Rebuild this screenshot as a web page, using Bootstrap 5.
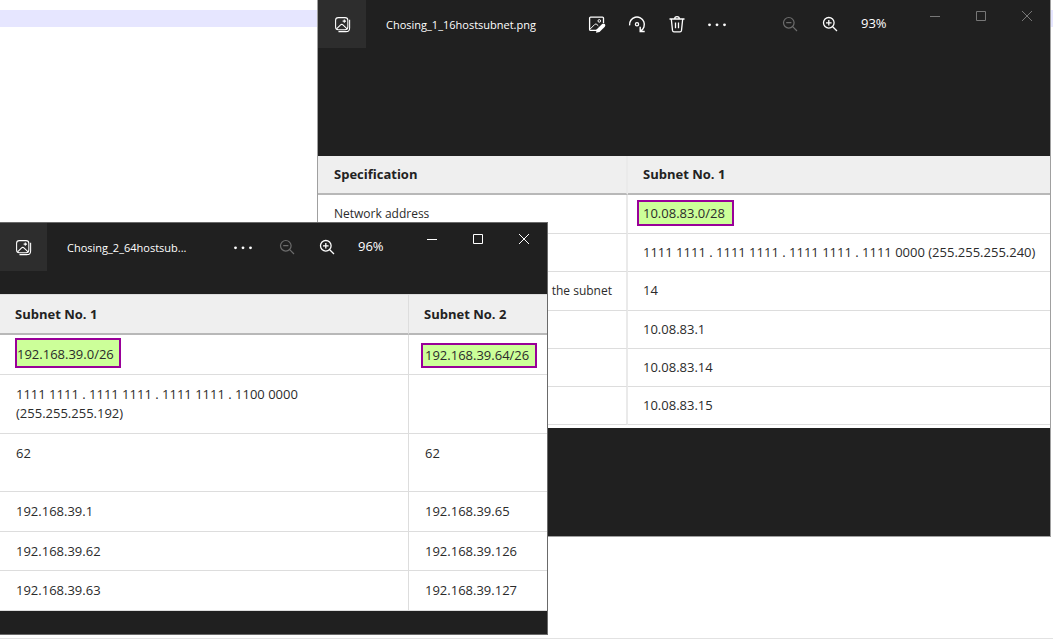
<!DOCTYPE html>
<html lang="en">
<head>
<meta charset="utf-8">
<meta name="viewport" content="width=device-width, initial-scale=1">
<title>Subnet images</title>
<link href="https://cdn.jsdelivr.net/npm/bootstrap@5.3.0/dist/css/bootstrap.min.css" rel="stylesheet">
<style>
  body { font-family: "Open Sans", "Noto Sans", sans-serif; font-size: 13px; line-height: 19px; background: #fff; color: #2b2b2b; }
  .desk { min-height: 100vh; border-bottom: 1px solid #e2e2e2; padding-top: 10px; overflow: hidden; }
  .band { height: 17px; background: #e6e6ff; }
  .viewer { background: #202020; color: #fff; }
  /* window placement on the desktop */
  .viewer-back { top: 0; left: 317px; right: 2px; border: 1px solid #a0a0a0; border-top: 0; padding-bottom: 108px; }
  .viewer-front { top: 222px; left: 0; right: 505px; border: 1px solid #6a6a6a; border-left: 0; padding-bottom: 23px; }
  .app-tile { width: 48px; height: 48px; background: #2d2d2d; }
  .viewer-front .app-tile { width: 47px; }
  .file-name { font-size: 11px; padding-left: 20px; width: 211px; }
  .viewer-front .file-name { width: 176px; }
  .tool { width: 40px; height: 48px; padding: 0; border: 0; background: none; color: #fff; display: flex; align-items: center; justify-content: center; }
  .tool:disabled { color: #6c6c6c; }
  .zoom-set { margin-left: 33px; }
  .viewer-front .zoom-set { margin-left: 4px; }
  .percent { margin-left: 11px; padding-bottom: 2px; }
  .win-btn { width: 46px; height: 32px; padding: 0; border: 0; background: none; color: #fff; display: flex; align-items: center; justify-content: center; }
  .viewer-back .win-btn { color: #777; }
  .photo-back { background: #fff; margin-top: 108px; padding-bottom: 3px; }
  .photo-front { background: #fff; margin-top: 23px; }
  svg { display: block; fill: none; stroke: currentColor; }
  .sheet { width: 100%; table-layout: fixed; border-collapse: separate; border-spacing: 0; color: #2b2b2b; }
  .sheet th { background: #efefef; border-bottom: 2px solid #b8b8b8; font-weight: 700; padding: 9px 16px; vertical-align: middle; color: #222; }
  .sheet td { border-bottom: 1px solid #ddd; padding: 9px 16px; vertical-align: top; }
  .sheet tr > :first-child { border-right: 1px solid #ddd; }
  .photo-back tr > :first-child { border-right: 2px solid #eaeaea; padding-left: 16px; padding-right: 14px; }
  .photo-back td:first-child { font-size: 12px; }
  .photo-back .spec { width: 310px; }
  .photo-back tbody tr:nth-child(-2n+3) td { padding-bottom: 10px; }
  .photo-back tr > :last-child { padding-left: 15px; padding-right: 8px; }
  .photo-front .first { width: 409px; }
  .photo-front th { border-top: 1px solid #ddd; padding-top: 10px; padding-left: 15px; }
  .photo-front td { padding-top: 10px; padding-bottom: 10px; }
  .photo-front .roomy td { height: 58px; }
  .photo-front .snug td { padding-bottom: 9px; }
  .picked { display: block; width: max-content; background: #cf9; border: 2px solid #909; line-height: 19px; }
  .pick-a { padding: 2px 7px 1px 4px; margin: -4px 0 -4px -6px; }
  .pick-b { padding: 5px 5px 2px 0; margin: -7px 0 -4px -1px; }
  .pick-c { padding: 1px 6px 1px 2px; margin: -2px 0 -4px -4px; }
</style>
</head>
<body>
<svg class="d-none" aria-hidden="true">
  <symbol id="i-photo" viewBox="0 0 16 16"><rect x="1.500" y="1.500" width="11.500" height="11.500" rx="2.600"/><path d="M2.400 12.200 6.200 8.400q1.100-1 2.200 0l3.900 3.800M14.700 3.500v7.700q0 3.500-3.500 3.500H4.200"/><path d="M9.700 3.200v3.200M8.100 4.800h3.200"/></symbol>
  <symbol id="i-edit" viewBox="0 0 18 18"><path d="M9 15.400H2.600q-1 0-1-1V3.100q0-1 1-1h11.900q1 0 1 1v5" stroke-width="1.300"/><circle cx="11.300" cy="5.900" r="1.300"/><path d="m2.200 14 4.600-4.600q1-.8 2 0l1.500 1.400"/><path d="m8.800 14.200 5.300-5.300q1.400-1 2.700.2 1.100 1.300 0 2.700L11.500 17l-3.500.8z" fill="currentColor" stroke="none"/></symbol>
  <symbol id="i-rotate" viewBox="0 0 18 18"><path d="M1.600 10.300a7.400 7.400 0 1 1 11 5.600M12.200 11.800v4.700h4.500" stroke-width="1.400"/><circle cx="9" cy="9.200" r="1.600" stroke-width="1.300"/></symbol>
  <symbol id="i-trash" viewBox="0 0 18 18"><path d="M1.500 4h15M6.600 4Q6.600 1.700 9 1.700T11.400 4M3.300 4l1.200 11.400q.2 1.400 1.500 1.400h6q1.300 0 1.500-1.400L14.700 4M7.500 7.400v5.800M10.500 7.400v5.800" stroke-width="1.300"/></symbol>
  <symbol id="i-dots" viewBox="0 0 20 16"><g fill="currentColor" stroke="none"><circle cx="2.500" cy="8.800" r="1.400"/><circle cx="10" cy="8.800" r="1.400"/><circle cx="17.500" cy="8.800" r="1.400"/></g></symbol>
  <symbol id="i-out" viewBox="0 0 16 16"><circle cx="6.800" cy="6.800" r="5.300" stroke-width="1.200"/><path d="M4.200 6.700h5.200M10.700 10.700l4.300 4.300" stroke-width="1.200"/></symbol>
  <symbol id="i-in" viewBox="0 0 16 16"><circle cx="6.800" cy="6.800" r="5.300" stroke-width="1.300"/><path d="M4 6.800h5.600M6.800 4v5.600M10.700 10.700l4.300 4.300" stroke-width="1.300"/></symbol>
  <symbol id="i-min" viewBox="0 0 12 12"><path d="M1 6.500h10"/></symbol>
  <symbol id="i-max" viewBox="0 0 12 12"><path d="M1.500 1.500h9v9h-9z"/></symbol>
  <symbol id="i-close" viewBox="0 0 12 12"><path d="m1 1 10 10M11 1 1 11"/></symbol>
</svg>

<main class="desk position-relative">
  <div class="band"></div>

  <section class="viewer viewer-back position-absolute" aria-label="Image viewer 1">
    <header class="d-flex align-items-start">
      <div class="app-tile d-flex align-items-center justify-content-center flex-shrink-0"><svg width="17" height="17"><use href="#i-photo"/></svg></div>
      <div class="d-flex align-items-center">
        <div class="file-name text-nowrap">Chosing_1_16hostsubnet.png</div>
        <button class="tool" type="button" aria-label="Edit image"><svg width="18" height="18"><use href="#i-edit"/></svg></button>
        <button class="tool" type="button" aria-label="Rotate"><svg width="18" height="18"><use href="#i-rotate"/></svg></button>
        <button class="tool" type="button" aria-label="Delete"><svg width="18" height="18"><use href="#i-trash"/></svg></button>
        <button class="tool" type="button" aria-label="More"><svg width="20" height="16"><use href="#i-dots"/></svg></button>
        <div class="zoom-set d-flex align-items-center">
          <button class="tool" type="button" aria-label="Zoom out" disabled><svg width="16" height="16"><use href="#i-out"/></svg></button>
          <button class="tool" type="button" aria-label="Zoom in"><svg width="16" height="16"><use href="#i-in"/></svg></button>
          <span class="percent">93%</span>
        </div>
      </div>
      <div class="d-flex ms-auto">
        <button class="win-btn" type="button" aria-label="Minimize"><svg width="12" height="12"><use href="#i-min"/></svg></button>
        <button class="win-btn" type="button" aria-label="Maximize"><svg width="12" height="12"><use href="#i-max"/></svg></button>
        <button class="win-btn" type="button" aria-label="Close"><svg width="12" height="12"><use href="#i-close"/></svg></button>
      </div>
    </header>
    <div class="photo-back">
      <table class="sheet">
        <thead><tr><th class="spec" scope="col">Specification</th><th scope="col">Subnet No. 1</th></tr></thead>
        <tbody>
          <tr><td>Network address</td><td><span class="picked pick-a">10.08.83.0/28</span></td></tr>
          <tr><td></td><td class="text-nowrap">1111 1111 . 1111 1111 . 1111 1111 . 1111 0000 (255.255.255.240)</td></tr>
          <tr><td class="text-end">the subnet</td><td>14</td></tr>
          <tr><td></td><td>10.08.83.1</td></tr>
          <tr><td></td><td>10.08.83.14</td></tr>
          <tr><td></td><td>10.08.83.15</td></tr>
        </tbody>
      </table>
    </div>
  </section>

  <section class="viewer viewer-front position-absolute" aria-label="Image viewer 2">
    <header class="d-flex align-items-start">
      <div class="app-tile d-flex align-items-center justify-content-center flex-shrink-0"><svg width="17" height="17"><use href="#i-photo"/></svg></div>
      <div class="d-flex align-items-center">
        <div class="file-name text-nowrap">Chosing_2_64hostsub...</div>
        <button class="tool" type="button" aria-label="More"><svg width="20" height="16"><use href="#i-dots"/></svg></button>
        <div class="zoom-set d-flex align-items-center">
          <button class="tool" type="button" aria-label="Zoom out" disabled><svg width="16" height="16"><use href="#i-out"/></svg></button>
          <button class="tool" type="button" aria-label="Zoom in"><svg width="16" height="16"><use href="#i-in"/></svg></button>
          <span class="percent">96%</span>
        </div>
      </div>
      <div class="d-flex ms-auto">
        <button class="win-btn" type="button" aria-label="Minimize"><svg width="12" height="12"><use href="#i-min"/></svg></button>
        <button class="win-btn" type="button" aria-label="Maximize"><svg width="12" height="12"><use href="#i-max"/></svg></button>
        <button class="win-btn" type="button" aria-label="Close"><svg width="12" height="12"><use href="#i-close"/></svg></button>
      </div>
    </header>
    <div class="photo-front">
      <table class="sheet">
        <thead><tr><th class="first" scope="col">Subnet No. 1</th><th scope="col">Subnet No. 2</th></tr></thead>
        <tbody>
          <tr><td><span class="picked pick-b">192.168.39.0/26</span></td><td><span class="picked pick-c">192.168.39.64/26</span></td></tr>
          <tr><td>1111 1111 . 1111 1111 . 1111 1111 . 1100 0000 (255.255.255.192)</td><td></td></tr>
          <tr class="roomy"><td>62</td><td>62</td></tr>
          <tr><td>192.168.39.1</td><td>192.168.39.65</td></tr>
          <tr class="snug"><td>192.168.39.62</td><td>192.168.39.126</td></tr>
          <tr><td>192.168.39.63</td><td>192.168.39.127</td></tr>
        </tbody>
      </table>
    </div>
  </section>
</main>
<script src="https://cdn.jsdelivr.net/npm/bootstrap@5.3.0/dist/js/bootstrap.bundle.min.js"></script>
</body>
</html>
